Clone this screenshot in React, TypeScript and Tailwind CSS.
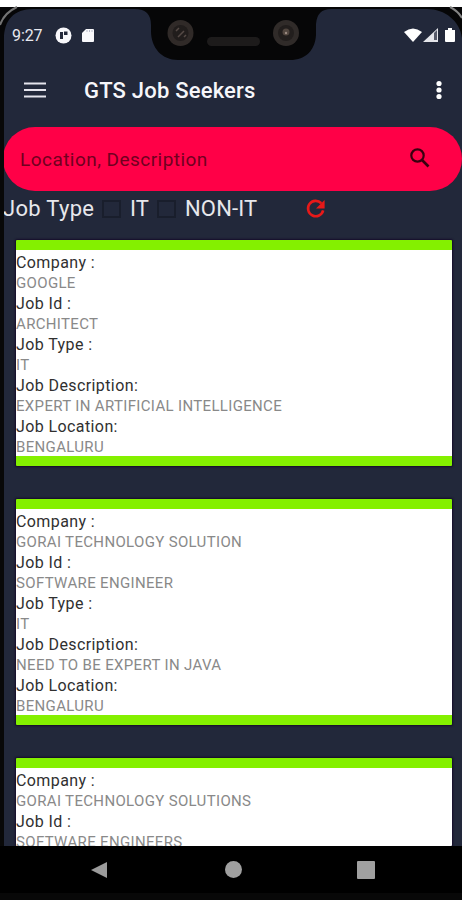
import React from "react";

type Job = { company: string; id: string; type: string; description: string; location: string };

const jobs: Job[] = [
  { company: "GOOGLE", id: "ARCHITECT", type: "IT", description: "EXPERT IN ARTIFICIAL INTELLIGENCE", location: "BENGALURU" },
  { company: "GORAI TECHNOLOGY SOLUTION", id: "SOFTWARE ENGINEER", type: "IT", description: "NEED TO BE EXPERT IN JAVA", location: "BENGALURU" },
];

const partialJob = { company: "GORAI TECHNOLOGY SOLUTIONS", id: "SOFTWARE ENGINEERS" };

function Field({ label, value }: { label: string; value: string }) {
  return (
    <>
      <dt className="h-[20.55px] pt-[0.8px] text-[16px] tracking-[0.4px] text-[#303030]">{label}</dt>
      <dd className="h-[20.55px] text-[15px] tracking-[0.34px] text-[#898989]">{value}</dd>
    </>
  );
}

const cardClass =
  "shrink-0 rounded-[1px] border-[#84f000] bg-white pt-[2px] pl-[0.5px] leading-[20.55px] whitespace-nowrap shadow-[0_0_2px_1px_#150c2b]";

function JobCard({ job }: { job: Job }) {
  return (
    <dl className={cardClass + " h-[226px] border-y-[10px]"}>
      <Field label="Company :" value={job.company} />
      <Field label="Job Id :" value={job.id} />
      <Field label="Job Type :" value={job.type} />
      <Field label="Job Description:" value={job.description} />
      <Field label="Job Location:" value={job.location} />
    </dl>
  );
}

function PhoneTop() {
  return (
    <svg className="pointer-events-none absolute top-0 left-0" width="462" height="70" viewBox="0 0 462 70">
      <path d="M0 7H462V38C460 21 445 9 427 9H331Q317 9 316 24V35C315 50 306 60 290 60H178C162 60 151 48 151 31V25Q151 9 135 9H33C14 9 4 20 4 39V70H0Z" fill="#060607" />
      <path d="M0 25Q4 13 17 7" fill="none" stroke="#737373" strokeWidth="2" />
      <path d="M450 7Q458 11 462 18" fill="none" stroke="#858585" strokeWidth="2" />
      <circle cx="180.500" cy="33" r="13" fill="#302a28" />
      <circle cx="180.500" cy="33" r="8" fill="#211d1c" />
      <path d="M176 31l3-3M178 37l6-6M184 37l2-2" stroke="#554a46" strokeWidth="1.500" />
      <rect x="207" y="37" width="53" height="9" rx="4.500" fill="#1d1b1b" />
      <circle cx="286" cy="33" r="13" fill="#302b29" />
      <circle cx="286" cy="33" r="8" fill="#221e1d" />
      <circle cx="286" cy="32" r="3.500" fill="#51463f" />
      <circle cx="286" cy="33" r="1.200" fill="#9a8b82" />
    </svg>
  );
}

export default function App() {
  return (
    <div className="relative flex h-[900px] w-[462px] flex-col overflow-hidden bg-[#080808] pl-[4px] font-['Roboto',sans-serif]">
      <div className="-ml-[4px] h-[7px] shrink-0 bg-white" />
      <div className="flex h-[839px] shrink-0 flex-col overflow-hidden bg-[#22283a]">
        <div className="flex h-[53px] shrink-0 items-center pt-[4px] pl-[8px] text-[#e8e8ef]">
          <span className="w-[32px] text-[16px] tracking-[-0.1px]">9:27</span>
          <svg className="ml-[11px]" width="17" height="17" viewBox="0 0 17 17">
            <circle cx="8.500" cy="8.500" r="8" fill="#f8f8fb" />
            <path d="M5 5h3v7H5ZM9 4.500H12.500v3.500H9Z" fill="#22283a" />
          </svg>
          <svg className="ml-[9px]" width="14" height="15" viewBox="0 0 14 15">
            <path d="M5 1h7q1 0 1 1v11q0 1-1 1H2q-1 0-1-1V5Z" fill="#f8f8fb" />
            <path d="M6 2v2M8.500 2v2M11 2v2" stroke="#b9bccb" />
          </svg>
          <svg className="ml-[309px]" width="52" height="17" viewBox="0 0 52 17">
            <path d="M0 5Q9-2 18 5L9 15Z" fill="#fff" />
            <path d="M34 1V15H19Z" fill="#e4e5ea" />
            <path d="M30 6v7h3V3Z" fill="#555969" />
            <path d="M41 3h3V1h4v2h3v11q0 1-1 1h-8q-1 0-1-1Z" fill="#fff" />
          </svg>
        </div>
        <header className="flex h-[67px] shrink-0 items-center pb-[7px] pl-[20px] text-[#f6f6fa]">
          <svg width="22" height="16" viewBox="0 0 22 16">
            <path d="M0 1.500h22M0 8h22M0 14.500h22" stroke="#e4e4ec" strokeWidth="2.200" />
          </svg>
          <h1 className="ml-[38px] w-[180px] text-[22px] font-medium tracking-[0.2px] whitespace-nowrap">GTS Job Seekers</h1>
          <svg className="ml-[172px]" width="6" height="20" viewBox="0 0 6 20">
            <circle cx="3" cy="3.500" r="2.600" fill="white" />
            <circle cx="3" cy="10" r="2.600" fill="white" />
            <circle cx="3" cy="16.500" r="2.600" fill="white" />
          </svg>
        </header>
        <div className="-ml-px flex h-[64px] shrink-0 items-center justify-between rounded-[32px] bg-[#ff0047] pr-[30px] pl-[17px] text-[19px] tracking-[0.46px] text-[#70001f]">
          <span className="pt-[2px]">Location, Description</span>
          <svg className="-mt-[3px]" width="24" height="24" viewBox="0 0 24 24">
            <circle cx="9.500" cy="9.500" r="6.200" fill="none" stroke="#38000f" strokeWidth="2.200" />
            <path d="m14 14 6.500 6.500" stroke="#38000f" strokeWidth="2.700" />
          </svg>
        </div>
        <div className="-ml-px flex h-[35px] shrink-0 items-center text-[22px] whitespace-nowrap text-[#e7e7ec]">
          <span className="w-[99px] tracking-[0.3px]">Job Type</span>
          <span className="h-[18px] w-[19px] border-2 border-[#191e2c]" />
          <span className="ml-[9px] w-[27px]">IT</span>
          <span className="h-[18px] w-[19px] border-2 border-[#191e2c]" />
          <span className="ml-[9px] w-[73px] tracking-[0.15px]">NON-IT</span>
          <svg className="ml-[46px]" width="23" height="23" viewBox="0 0 24 24">
            <path d="M18 6.500A8 8 0 1 0 20 14" fill="none" stroke="#e81919" strokeWidth="2.700" />
            <path d="M21.500 3v9h-9Z" fill="#e81919" />
          </svg>
        </div>
        <main className="flex flex-col gap-[33px] pt-[14px] pr-[10.5px] pl-[11.5px]">
          {jobs.map((job) => <JobCard key={job.company} job={job} />)}
          <dl className={cardClass + " h-[88px] overflow-hidden border-t-[10px]"}>
            <Field label="Company :" value={partialJob.company} />
            <Field label="Job Id :" value={partialJob.id} />
          </dl>
        </main>
      </div>
      <nav className="-ml-[4px] flex h-[47px] shrink-0 items-center bg-black pl-[90px]">
        <svg width="18" height="18" viewBox="0 0 18 18"><path d="M1 9 17 1V17Z" fill="#9b9b9b" /></svg>
        <span className="ml-[117px] size-[17px] rounded-full bg-[#a0a0a0]" />
        <span className="ml-[115px] size-[18px] rounded-[1px] bg-[#a0a0a0]" />
      </nav>
      <PhoneTop />
    </div>
  );
}
